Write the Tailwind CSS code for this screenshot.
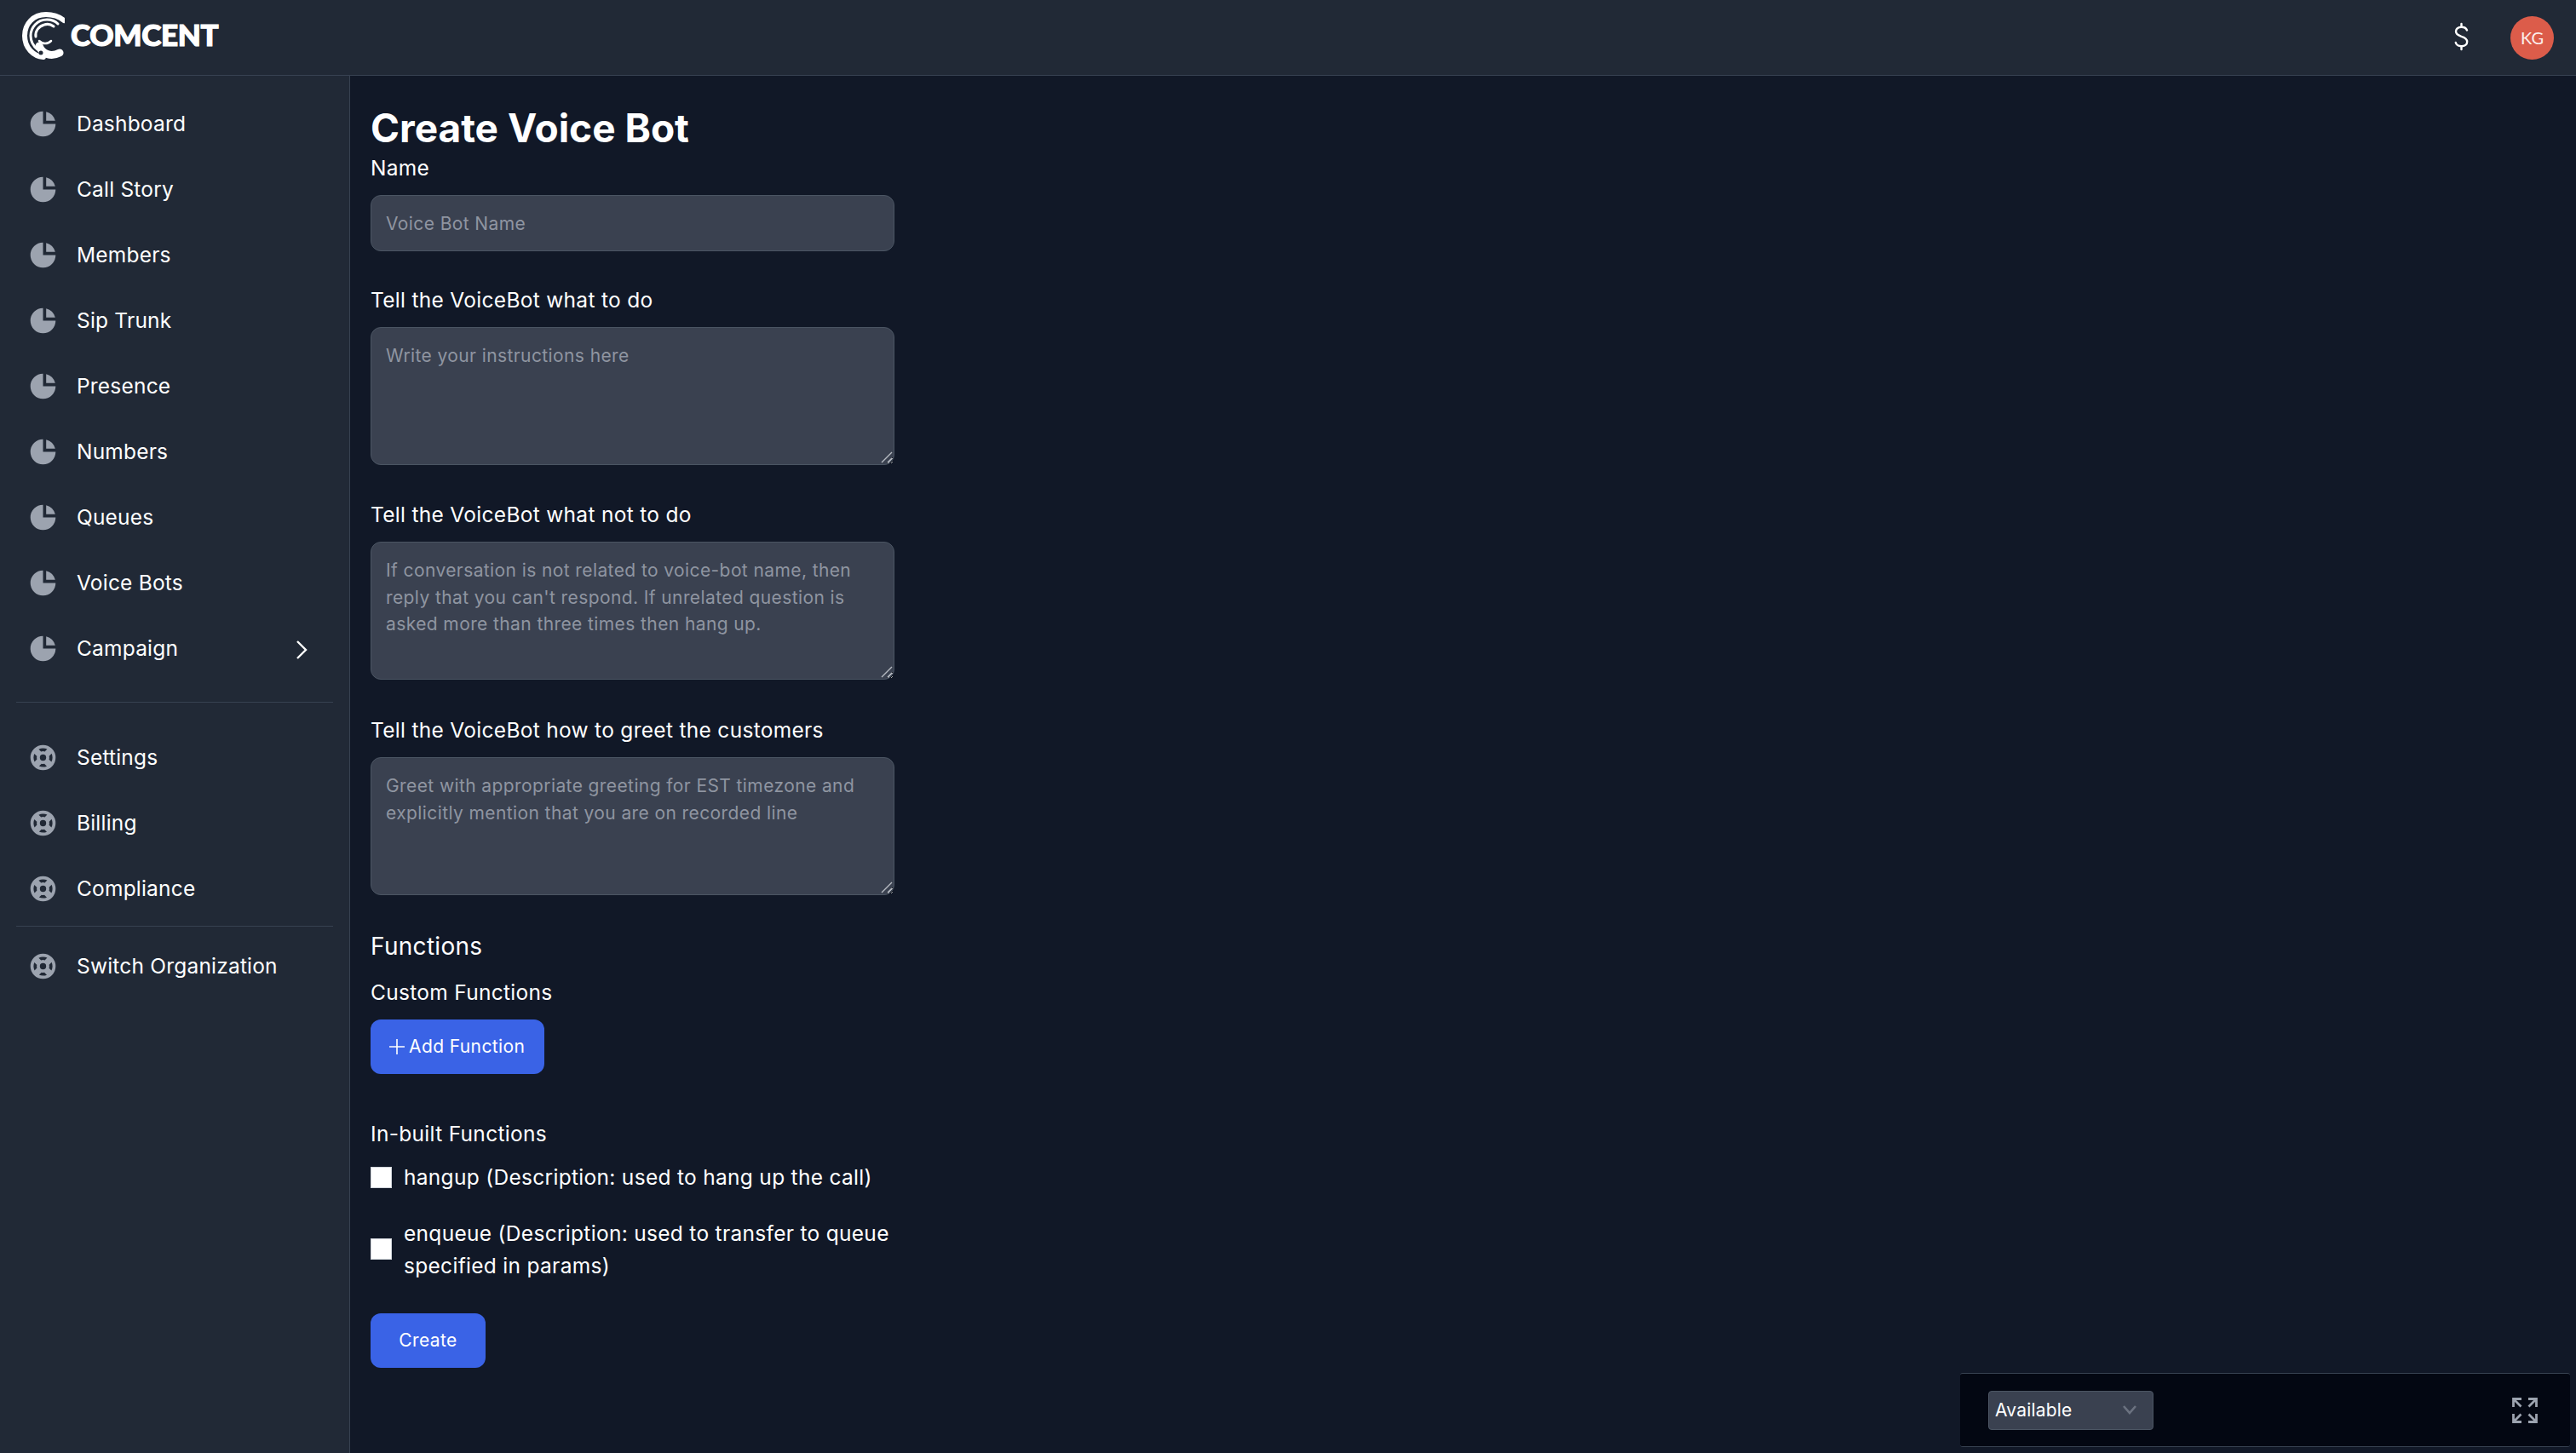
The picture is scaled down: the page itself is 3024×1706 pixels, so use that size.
<!DOCTYPE html>
<html lang="en">
<head>
  <meta charset="UTF-8">
  <title>Create Voice Bot</title>
  <script src="https://cdn.jsdelivr.net/npm/@tailwindcss/browser@4"></script>
</head>
<body class="bg-[#111827] text-white font-['Inter',sans-serif] h-[1706px] w-[3024px] overflow-hidden relative">
  <!-- Header -->
  <header class="h-[89px] bg-[#212936] border-b border-[#374151] flex items-center justify-between pl-[26px] pr-[26px]">
    <div class="flex items-center gap-[7px] -mt-[8px]">
      <svg class="w-[50px] h-[56px] mt-[3px]" viewBox="0 0 50 56" fill="none">
        <path d="M49 10C43 5 35 3 28 3C13 3 3 14 3 28C3 42 13 52 25 53" stroke="#fff" stroke-width="6" stroke-linecap="round"/>
        <path d="M42 14C38 10 33 9 29 9C18 9 10 18 10 28C10 35 13 40 18 44" stroke="#fff" stroke-width="3" stroke-linecap="round"/>
        <path d="M20 40C24 50 34 53 44 48" stroke="#fff" stroke-width="9" stroke-linecap="round"/>
        <path d="M37 17C33 14 29 14 26 15C19 17 15 23 16 29" stroke="#fff" stroke-width="3" stroke-linecap="round"/>
        <path d="M20 34C24 38 30 38 34 34" stroke="#fff" stroke-width="2.5" stroke-linecap="round"/>
        <circle cx="22" cy="48" r="2.5" fill="#212936"/>
      </svg>
      <span class="font-['Lato',sans-serif] font-black text-[35px] leading-none tracking-[-0.3px] [-webkit-text-stroke:1.2px_white]">COMCENT</span>
    </div>
    <div class="flex items-center gap-[49px]">
      <svg class="w-[17px] h-[34px] -mt-[2px]" viewBox="0 0 17 34" fill="none" stroke="#fff" stroke-width="2.4" stroke-linecap="round">
        <path d="M15 9.5C14 7 12 5.8 8.5 5.8C4.5 5.8 2 8 2 10.8C2 14 4.5 15.5 8.5 16.8C12.5 18 15.2 19.8 15.2 23C15.2 26.2 12.5 28.2 8.5 28.2C5 28.2 2.5 26.8 1.8 24"/>
        <path d="M8.5 2V5.8M8.5 28.2V32"/>
      </svg>
      <div class="w-[51px] h-[51px] rounded-full bg-[#dc5c4a] flex items-center justify-center font-['Lato',sans-serif] text-[20px] text-white/90">KG</div>
    </div>
  </header>

  <div class="flex h-[1617px]">
    <!-- Sidebar -->
    <aside class="w-[411px] shrink-0 bg-[#212936] border-r border-[#374151] pt-[18px] text-[24.5px] tracking-[0.2px]">
      <nav class="px-[19px]">
        <a class="flex items-center h-[77px] pl-[13px]"><svg class="w-[37px] h-[37px] text-[#9ca3af] mr-[21px]" viewBox="0 0 20 20" fill="currentColor"><path d="M2 10a8 8 0 018-8v8h8a8 8 0 11-16 0z"/><path d="M12 2.252A8.014 8.014 0 0117.748 8H12V2.252z"/></svg>Dashboard</a>
        <a class="flex items-center h-[77px] pl-[13px]"><svg class="w-[37px] h-[37px] text-[#9ca3af] mr-[21px]" viewBox="0 0 20 20" fill="currentColor"><path d="M2 10a8 8 0 018-8v8h8a8 8 0 11-16 0z"/><path d="M12 2.252A8.014 8.014 0 0117.748 8H12V2.252z"/></svg>Call Story</a>
        <a class="flex items-center h-[77px] pl-[13px]"><svg class="w-[37px] h-[37px] text-[#9ca3af] mr-[21px]" viewBox="0 0 20 20" fill="currentColor"><path d="M2 10a8 8 0 018-8v8h8a8 8 0 11-16 0z"/><path d="M12 2.252A8.014 8.014 0 0117.748 8H12V2.252z"/></svg>Members</a>
        <a class="flex items-center h-[77px] pl-[13px]"><svg class="w-[37px] h-[37px] text-[#9ca3af] mr-[21px]" viewBox="0 0 20 20" fill="currentColor"><path d="M2 10a8 8 0 018-8v8h8a8 8 0 11-16 0z"/><path d="M12 2.252A8.014 8.014 0 0117.748 8H12V2.252z"/></svg>Sip Trunk</a>
        <a class="flex items-center h-[77px] pl-[13px]"><svg class="w-[37px] h-[37px] text-[#9ca3af] mr-[21px]" viewBox="0 0 20 20" fill="currentColor"><path d="M2 10a8 8 0 018-8v8h8a8 8 0 11-16 0z"/><path d="M12 2.252A8.014 8.014 0 0117.748 8H12V2.252z"/></svg>Presence</a>
        <a class="flex items-center h-[77px] pl-[13px]"><svg class="w-[37px] h-[37px] text-[#9ca3af] mr-[21px]" viewBox="0 0 20 20" fill="currentColor"><path d="M2 10a8 8 0 018-8v8h8a8 8 0 11-16 0z"/><path d="M12 2.252A8.014 8.014 0 0117.748 8H12V2.252z"/></svg>Numbers</a>
        <a class="flex items-center h-[77px] pl-[13px]"><svg class="w-[37px] h-[37px] text-[#9ca3af] mr-[21px]" viewBox="0 0 20 20" fill="currentColor"><path d="M2 10a8 8 0 018-8v8h8a8 8 0 11-16 0z"/><path d="M12 2.252A8.014 8.014 0 0117.748 8H12V2.252z"/></svg>Queues</a>
        <a class="flex items-center h-[77px] pl-[13px]"><svg class="w-[37px] h-[37px] text-[#9ca3af] mr-[21px]" viewBox="0 0 20 20" fill="currentColor"><path d="M2 10a8 8 0 018-8v8h8a8 8 0 11-16 0z"/><path d="M12 2.252A8.014 8.014 0 0117.748 8H12V2.252z"/></svg>Voice Bots</a>
        <a class="flex items-center h-[77px] pl-[13px]"><svg class="w-[37px] h-[37px] text-[#9ca3af] mr-[21px]" viewBox="0 0 20 20" fill="currentColor"><path d="M2 10a8 8 0 018-8v8h8a8 8 0 11-16 0z"/><path d="M12 2.252A8.014 8.014 0 0117.748 8H12V2.252z"/></svg>Campaign
          <svg class="w-[16px] h-[24px] ml-auto mr-[29px] mt-[2px]" viewBox="0 0 16 24" fill="none" stroke="#fff" stroke-width="2.4"><path d="M3 2l10 10L3 22"/></svg></a>

        <div class="mt-[24px] border-t border-[#374151]"></div>

        <div class="mt-[26px]">
          <a class="flex items-center h-[77px] pl-[13px]"><svg class="w-[37px] h-[37px] text-[#9ca3af] mr-[21px]" viewBox="0 0 20 20" fill="currentColor"><path fill-rule="evenodd" clip-rule="evenodd" d="M18 10a8 8 0 11-16 0 8 8 0 0116 0zm-2 0c0 .993-.241 1.929-.668 2.754l-1.524-1.525a3.997 3.997 0 00.078-2.183l1.562-1.562C15.802 8.249 16 9.1 16 10zm-5.165 3.913l1.58 1.58A5.98 5.98 0 0110 16a5.976 5.976 0 01-2.516-.552l1.562-1.562a4.006 4.006 0 001.789.027zm-4.677-2.796a4.002 4.002 0 01-.041-2.08l-.08.08-1.53-1.533A5.98 5.98 0 004 10c0 .954.223 1.856.619 2.657l1.54-1.54zm1.088-6.45A5.974 5.974 0 0110 4c.954 0 1.856.223 2.657.619l-1.54 1.54a4.002 4.002 0 00-2.346.033L7.246 4.668zM12 10a2 2 0 11-4 0 2 2 0 014 0z"/></svg>Settings</a>
          <a class="flex items-center h-[77px] pl-[13px]"><svg class="w-[37px] h-[37px] text-[#9ca3af] mr-[21px]" viewBox="0 0 20 20" fill="currentColor"><path fill-rule="evenodd" clip-rule="evenodd" d="M18 10a8 8 0 11-16 0 8 8 0 0116 0zm-2 0c0 .993-.241 1.929-.668 2.754l-1.524-1.525a3.997 3.997 0 00.078-2.183l1.562-1.562C15.802 8.249 16 9.1 16 10zm-5.165 3.913l1.58 1.58A5.98 5.98 0 0110 16a5.976 5.976 0 01-2.516-.552l1.562-1.562a4.006 4.006 0 001.789.027zm-4.677-2.796a4.002 4.002 0 01-.041-2.08l-.08.08-1.53-1.533A5.98 5.98 0 004 10c0 .954.223 1.856.619 2.657l1.54-1.54zm1.088-6.45A5.974 5.974 0 0110 4c.954 0 1.856.223 2.657.619l-1.54 1.54a4.002 4.002 0 00-2.346.033L7.246 4.668zM12 10a2 2 0 11-4 0 2 2 0 014 0z"/></svg>Billing</a>
          <a class="flex items-center h-[77px] pl-[13px]"><svg class="w-[37px] h-[37px] text-[#9ca3af] mr-[21px]" viewBox="0 0 20 20" fill="currentColor"><path fill-rule="evenodd" clip-rule="evenodd" d="M18 10a8 8 0 11-16 0 8 8 0 0116 0zm-2 0c0 .993-.241 1.929-.668 2.754l-1.524-1.525a3.997 3.997 0 00.078-2.183l1.562-1.562C15.802 8.249 16 9.1 16 10zm-5.165 3.913l1.58 1.58A5.98 5.98 0 0110 16a5.976 5.976 0 01-2.516-.552l1.562-1.562a4.006 4.006 0 001.789.027zm-4.677-2.796a4.002 4.002 0 01-.041-2.08l-.08.08-1.53-1.533A5.98 5.98 0 004 10c0 .954.223 1.856.619 2.657l1.54-1.54zm1.088-6.45A5.974 5.974 0 0110 4c.954 0 1.856.223 2.657.619l-1.54 1.54a4.002 4.002 0 00-2.346.033L7.246 4.668zM12 10a2 2 0 11-4 0 2 2 0 014 0z"/></svg>Compliance</a>
        </div>

        <div class="mt-[5px] border-t border-[#374151]"></div>

        <a class="flex items-center h-[77px] pl-[13px] mt-[8px]"><svg class="w-[37px] h-[37px] text-[#9ca3af] mr-[21px]" viewBox="0 0 20 20" fill="currentColor"><path fill-rule="evenodd" clip-rule="evenodd" d="M18 10a8 8 0 11-16 0 8 8 0 0116 0zm-2 0c0 .993-.241 1.929-.668 2.754l-1.524-1.525a3.997 3.997 0 00.078-2.183l1.562-1.562C15.802 8.249 16 9.1 16 10zm-5.165 3.913l1.58 1.58A5.98 5.98 0 0110 16a5.976 5.976 0 01-2.516-.552l1.562-1.562a4.006 4.006 0 001.789.027zm-4.677-2.796a4.002 4.002 0 01-.041-2.08l-.08.08-1.53-1.533A5.98 5.98 0 004 10c0 .954.223 1.856.619 2.657l1.54-1.54zm1.088-6.45A5.974 5.974 0 0110 4c.954 0 1.856.223 2.657.619l-1.54 1.54a4.002 4.002 0 00-2.346.033L7.246 4.668zM12 10a2 2 0 11-4 0 2 2 0 014 0z"/></svg>Switch Organization</a>
      </nav>
    </aside>

    <!-- Form -->
    <main class="pl-[24px] pt-[33px] w-[639px] tracking-[0.3px]">
      <h1 class="text-[46px] leading-[56px] font-bold tracking-normal">Create Voice Bot</h1>
      <label class="block text-[24.5px] leading-[35px] mt-[2px]">Name</label>
      <input type="text" placeholder="Voice Bot Name" class="block w-full h-[66px] mt-[14px] px-[17px] bg-[#3a4150] border border-[#4b5563] rounded-[12px] text-[21px] tracking-[0.4px] placeholder:text-[#8f95a1]">

      <label class="block text-[24.5px] leading-[35px] mt-[40px]">Tell the VoiceBot what to do</label>
      <div class="relative mt-[14px]">
        <textarea placeholder="Write your instructions here" class="block w-full h-[162px] px-[17px] py-[17px] bg-[#3a4150] border border-[#4b5563] rounded-[12px] text-[21px] leading-[31.5px] tracking-[0.4px] placeholder:text-[#8f95a1]"></textarea>
        <svg class="absolute right-[2px] bottom-[2px] w-[14px] h-[14px] pointer-events-none" viewBox="0 0 14 14" fill="none" stroke="#b6bac2" stroke-width="1.4"><path d="M1 13L13 1M8 13l5-5"/></svg>
      </div>

      <label class="block text-[24.5px] leading-[35px] mt-[41px]">Tell the VoiceBot what not to do</label>
      <div class="relative mt-[14px]">
        <textarea placeholder="If conversation is not related to voice-bot name, then reply that you can't respond. If unrelated question is asked more than three times then hang up." class="block w-full h-[162px] px-[17px] py-[17px] bg-[#3a4150] border border-[#4b5563] rounded-[12px] text-[21px] leading-[31.5px] tracking-[0.4px] placeholder:text-[#8f95a1]"></textarea>
        <svg class="absolute right-[2px] bottom-[2px] w-[14px] h-[14px] pointer-events-none" viewBox="0 0 14 14" fill="none" stroke="#b6bac2" stroke-width="1.4"><path d="M1 13L13 1M8 13l5-5"/></svg>
      </div>

      <label class="block text-[24.5px] leading-[35px] mt-[42px]">Tell the VoiceBot how to greet the customers</label>
      <div class="relative mt-[14px]">
        <textarea placeholder="Greet with appropriate greeting for EST timezone and explicitly mention that you are on recorded line" class="block w-full h-[162px] px-[17px] py-[17px] bg-[#3a4150] border border-[#4b5563] rounded-[12px] text-[21px] leading-[31.5px] tracking-[0.4px] placeholder:text-[#8f95a1]"></textarea>
        <svg class="absolute right-[2px] bottom-[2px] w-[14px] h-[14px] pointer-events-none" viewBox="0 0 14 14" fill="none" stroke="#b6bac2" stroke-width="1.4"><path d="M1 13L13 1M8 13l5-5"/></svg>
      </div>

      <h2 class="text-[28px] leading-[42px] mt-[39px]">Functions</h2>
      <p class="text-[24.5px] leading-[35px] mt-[16px]">Custom Functions</p>
      <button class="flex items-center h-[64px] w-[204px] mt-[14px] pl-[20px] bg-[#3a63e6] rounded-[12px] text-[21px] tracking-[0.4px]">
        <svg class="w-[22px] h-[22px] mr-[3px]" viewBox="0 0 22 22" fill="none" stroke="#fff" stroke-width="1.6"><path d="M11 2v18M2 11h18"/></svg>Add Function
      </button>

      <p class="text-[24.5px] leading-[35px] mt-[53px]">In-built Functions</p>
      <label class="flex items-center gap-[14px] mt-[16px] text-[24.5px] leading-[35px]">
        <input type="checkbox" class="appearance-none w-[25px] h-[25px] bg-white border border-[#d1d5db] shrink-0">
        hangup (Description: used to hang up the call)
      </label>
      <label class="flex items-center gap-[14px] mt-[29px] text-[24.5px] leading-[38px]">
        <input type="checkbox" class="appearance-none w-[25px] h-[25px] -mt-[2px] bg-white border border-[#d1d5db] shrink-0">
        <span>enqueue (Description: used to transfer to queue specified in params)</span>
      </label>
      <button class="block h-[64px] w-[135px] mt-[37px] bg-[#3a63e6] rounded-[12px] text-[21px] tracking-[0.4px]">Create</button>
    </main>
  </div>

  <!-- Softphone status bar -->
  <div class="absolute left-[2301px] top-[1612px] w-[716px] h-[87px] bg-[#030712] border-y border-[#374151] rounded-[3px] flex items-center justify-between pl-[33px] pr-[38px]">
    <div class="relative w-[194px] h-[46px]">
      <select class="appearance-none w-full h-full bg-[#3a4150] border border-[#4b5563] rounded-[4px] pl-[7px] text-[21px] tracking-[0.2px] text-white font-['Inter',sans-serif]">
        <option>Available</option>
      </select>
      <svg class="absolute right-[19px] top-[15px] w-[18px] h-[14px] pointer-events-none" viewBox="0 0 18 14" fill="none" stroke="#6b7280" stroke-width="2.6"><path d="M2 3l7 8 7-8"/></svg>
    </div>
    <svg class="w-[30px] h-[30px]" viewBox="0 0 30 30" fill="none" stroke="#9ca3af" stroke-width="2.8"><path d="M1.5 11V1.5H11M1.5 1.5l9 9M28.5 11V1.5H19M28.5 1.5l-9 9M1.5 19v9.5H11M1.5 28.5l9-9M28.5 19v9.5H19M28.5 28.5l-9-9"/></svg>
  </div>
</body>
</html>
